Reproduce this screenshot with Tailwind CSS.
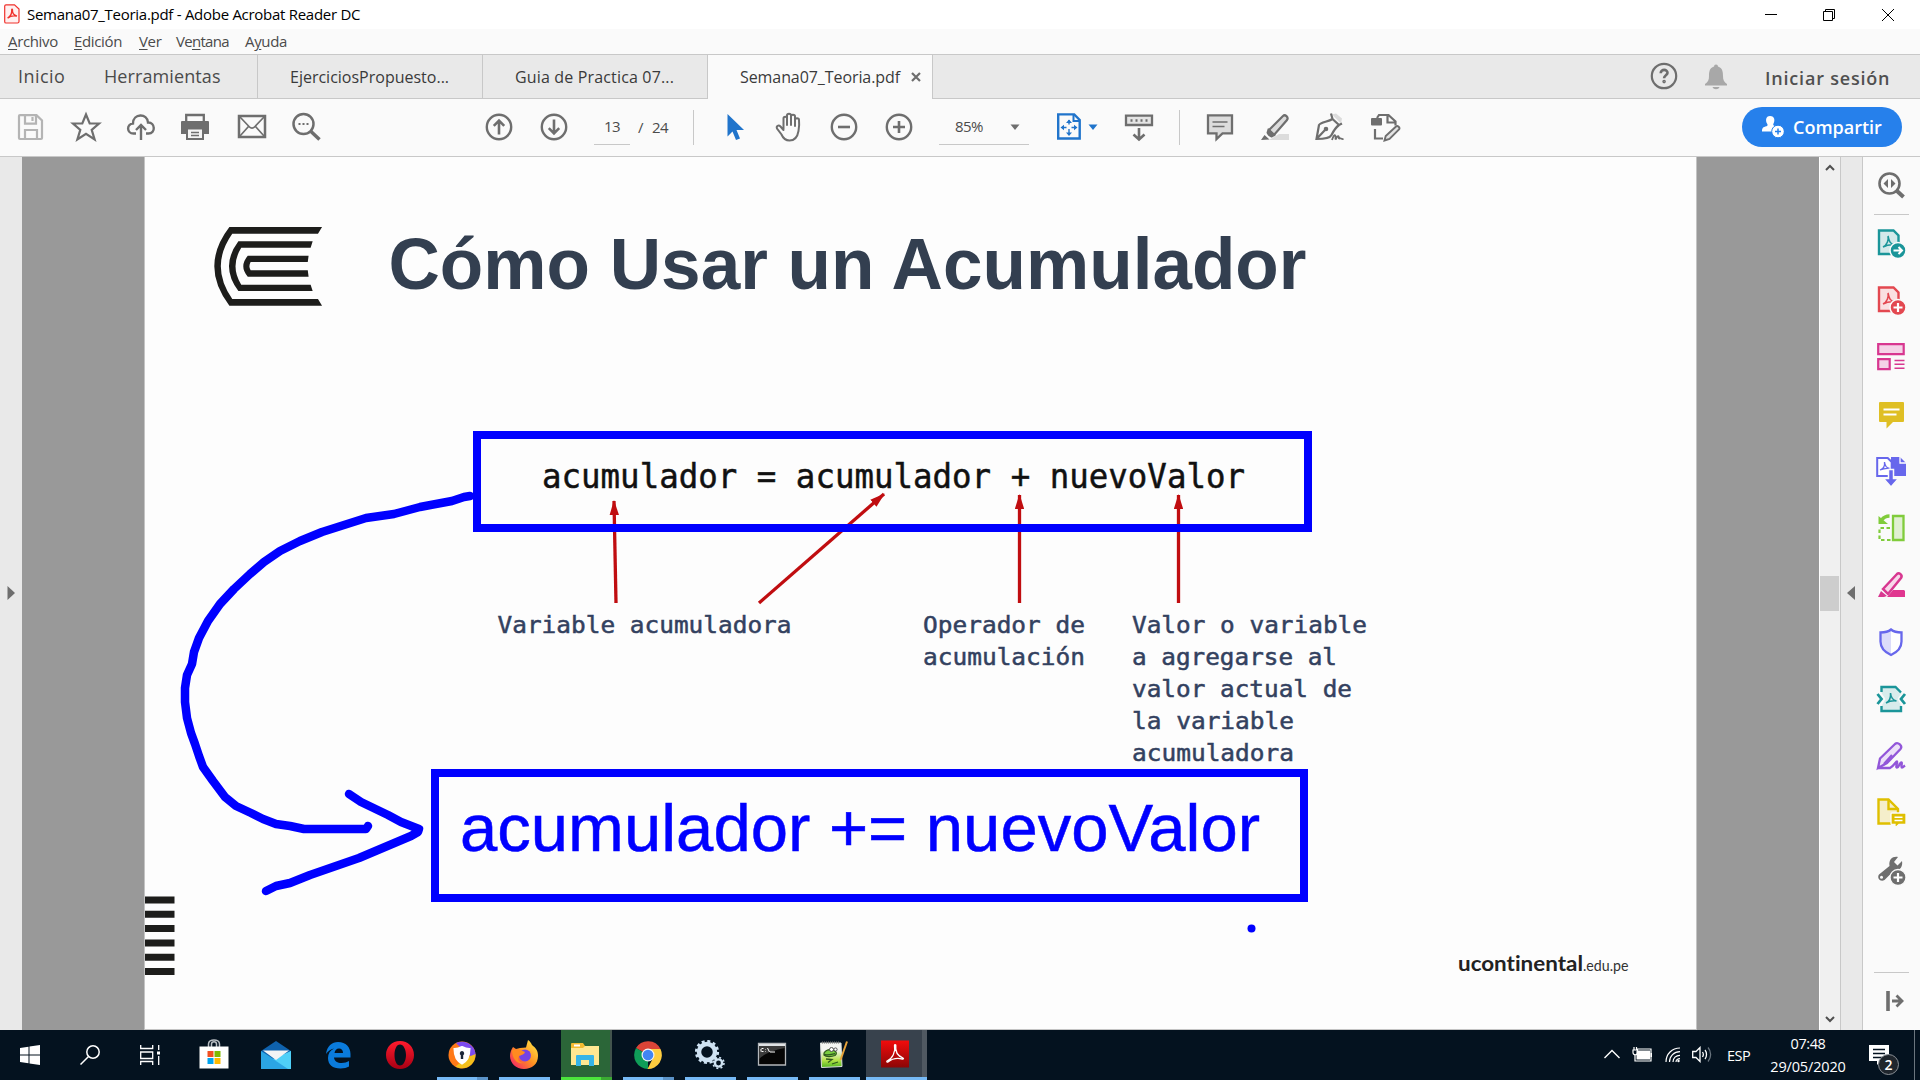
<!DOCTYPE html>
<html lang="es">
<head>
<meta charset="utf-8">
<title>Semana07_Teoria.pdf - Adobe Acrobat Reader DC</title>
<script src="https://cdn.jsdelivr.net/npm/@tailwindcss/browser@4"></script>
</head>
<body class="w-[1920px] h-[1080px] overflow-hidden flex flex-col bg-[#fafafa] font-['Open_Sans',sans-serif] text-[#4b4b4b]">

<!-- Title bar -->
<header class="h-[29px] shrink-0 bg-white flex items-center text-black">
  <svg class="ml-1 mr-[7px] mb-0.5 w-4 h-5 shrink-0" viewBox="0 0 16 20" fill="none" stroke="#f0322d"><path d="M2 .8H10.500L15 5v12.500a1.500 1.500 0 0 1-1.500 1.500H2a1.300 1.300 0 0 1-1.300-1.300V2A1.300 1.300 0 0 1 2 .8z" fill="#fff0f0" stroke-width="1.200"/><path d="M3.500 14c3-1.500 4.500-5 4.200-8.200 0-1 .9-.8.800.2-.3 3 1.500 5.200 4.500 6.200M4 14c2-2 5-2.500 8.500-2" stroke-width="1.300"/></svg>
  <span class="text-[15px] tracking-[-0.28px] whitespace-nowrap leading-none">Semana07_Teoria.pdf - Adobe Acrobat Reader DC</span>
  <div class="ml-auto flex items-center">
    <svg class="w-[58px] h-6" viewBox="0 0 58 24" stroke="#000"><path d="M23 11.500h12"/></svg>
    <svg class="w-[59px] h-6" viewBox="0 0 59 24" fill="none" stroke="#000"><path d="M23.500 8.500h9v9h-9zM25.500 8.500v-2h9v9h-2"/></svg>
    <svg class="w-[61px] h-6" viewBox="0 0 61 24" stroke="#000"><path d="M23 6l12 12M35 6l-12 12"/></svg>
  </div>
</header>

<!-- Menu bar -->
<nav class="h-[25px] shrink-0 flex items-center pl-2 pb-px text-[15px] leading-none tracking-[-0.35px] whitespace-nowrap">
  <span class="w-[66px]"><u class="underline-offset-2">A</u>rchivo</span>
  <span class="w-[65px]"><u class="underline-offset-2">E</u>dición</span>
  <span class="w-[37px]"><u class="underline-offset-2">V</u>er</span>
  <span class="w-[69px] tracking-[-0.7px]">Ve<u class="underline-offset-2">n</u>tana</span>
  <span>A<u class="underline-offset-2">y</u>uda</span>
</nav>

<!-- Tab strip -->
<div class="h-[45px] shrink-0 flex bg-[#e9e9e9] border-t border-[#c8c8c8] whitespace-nowrap text-[#4b4b4b]">
  <div class="w-[258px] border-r border-b border-[#c8c8c8] flex items-center pl-[18px] text-lg leading-none pb-0.5"><span class="w-[86px] tracking-[0.45px]">Inicio</span><span class="tracking-[0.1px]">Herramientas</span></div>
  <div class="w-[225px] border-r border-b border-[#c8c8c8] flex items-center pl-8 text-base leading-none text-[#3a3a3a]">EjerciciosPropuesto...</div>
  <div class="w-[225px] border-r border-b border-[#c8c8c8] flex items-center pl-8 text-base leading-none tracking-[0.16px] text-[#3a3a3a]">Guia de Practica 07...</div>
  <div class="w-[225px] border-r border-[#c8c8c8] bg-[#fafafa] flex items-center pl-8 text-base leading-none tracking-[-0.08px] text-[#3a3a3a]">Semana07_Teoria.pdf<svg class="ml-[11px] w-2.5 h-2.5" viewBox="0 0 10 10" stroke="#6e6e6e" stroke-width="2.200"><path d="M1 1l8 8M9 1l-8 8"/></svg></div>
  <div class="grow border-b border-[#c8c8c8] flex items-center justify-end pr-[29px]">
    <svg class="w-7 h-7 mr-[27px] mb-0.5" viewBox="0 0 28 28" fill="none" stroke="#6e6e6e" stroke-width="2.200"><circle cx="14" cy="14" r="12.200"/><path d="M10.700 11.200c0-4.500 7-4.200 6.800-.3-.1 2.400-3.500 2.400-3.400 5.300" stroke-width="2.600"/><circle cx="14.100" cy="19.600" r=".7"/></svg>
    <svg class="w-[22px] h-[26px] mr-[38px]" viewBox="0 0 22 26" fill="#a8a8a8"><path d="M9 2.500a2 2 0 0 1 4 0C17.500 4 18 8 18 12c0 4 1 6 4 8v1.500H0V20c3-2 4-4 4-8 0-4 .5-8 5-9.500zM7.500 23h7c-1 3-6 3-7 0z"/></svg>
    <span class="pt-0.5 w-[126px] text-lg font-semibold leading-none tracking-[0.8px] text-[#505050]">Iniciar sesión</span>
  </div>
</div>

<!-- Toolbar -->
<div class="h-[58px] shrink-0 flex items-center border-b border-[#c8c8c8] pl-[3px] pb-px text-[15px]">
  <div class="w-[55px] flex justify-center"><svg class="w-8 h-8" viewBox="0 0 32 32" fill="none" stroke="#b4b4b4" stroke-width="2.200"><path d="M5 4.100h16.500L27 9.500V27a1 1 0 0 1-1 1H5a1 1 0 0 1-1-1V5a1 1 0 0 1 1-1z"/><path d="M10 4.500v8.200h11V4.500M10 28v-9h12v9M17.500 6v4"/></svg></div>
  <div class="w-[55px] flex justify-center"><svg class="w-8 h-8" viewBox="0 0 32 32" fill="none" stroke="#6e6e6e" stroke-width="2.200"><path d="M16 3.500l3.700 9H29l-7.300 6.400 2.900 9.600L16 22.800 7.400 28.500l2.900-9.600L3 12.500h9.300z"/></svg></div>
  <div class="w-[55px] flex justify-center"><svg class="w-8 h-8" viewBox="0 0 32 32" fill="none" stroke="#6e6e6e" stroke-width="2.400"><path d="M11 22.500H8.500C1.500 22.500 1.300 13 8 12.500 8 2 22.500 2 23 11.500c7.200-.5 8 11 .5 11H21M16 29V15M11 19l5-5 5 5"/></svg></div>
  <div class="w-[54px] flex justify-center"><svg class="w-8 h-8" viewBox="0 0 32 32"><path d="M7.200 10V4h17.600v6" fill="none" stroke="#6e6e6e" stroke-width="2.300"/><path d="M3 10h26a1 1 0 0 1 1 1v12h-5v-6H7v6H2V11a1 1 0 0 1 1-1z" fill="#6e6e6e"/><path d="M8 17.500h16V28H8z" fill="#f4f4f4" stroke="#6e6e6e" stroke-width="2"/><path d="M12 21.500h8M12 24.500h8" stroke="#6e6e6e" stroke-width="1.300"/></svg></div>
  <div class="w-[57px] pl-0.5 flex justify-center"><svg class="w-8 h-8" viewBox="0 0 32 32" fill="none" stroke="#6e6e6e"><path d="M3 5h26v21H3z" stroke-width="2.500"/><path d="M4 6l9.500 10a3.400 3.400 0 0 0 5 0L28 6M4 25l8.500-9.500M28 25L19.500 15.500" stroke-width="1.700"/></svg></div>
  <div class="w-[54px] flex justify-center"><svg class="w-8 h-8" viewBox="0 0 32 32" fill="none" stroke="#6e6e6e"><circle cx="13.500" cy="13" r="10" stroke-width="2.500"/><path d="M21 20.500l8.500 8" stroke-width="3.500"/><path d="M8.500 13h2M12.500 13h2M16.500 13h2" stroke-width="2"/></svg></div>
  <div class="w-[55px] ml-[138px] flex justify-center"><svg class="w-8 h-8" viewBox="0 0 32 32" fill="none" stroke="#6e6e6e" stroke-width="2.400"><circle cx="16" cy="16" r="12.200"/><path d="M16 23.500V10M10.800 14.800L16 9.600l5.200 5.200" stroke-width="2.600"/></svg></div>
  <div class="w-[55px] flex justify-center"><svg class="w-8 h-8" viewBox="0 0 32 32" fill="none" stroke="#6e6e6e" stroke-width="2.400"><circle cx="16" cy="16" r="12.200"/><path d="M16 8.500V22M10.800 17.200l5.200 5.200 5.200-5.200" stroke-width="2.600"/></svg></div>
  <div class="w-9 h-[35px] ml-[13px] flex items-center justify-center border-b border-[#c8c8c8] tracking-[-0.5px]">13</div>
  <div class="w-[63px] pl-2 flex gap-[9px] tracking-[-0.5px]"><span>/</span><span>24</span></div>
  <div class="w-px h-[35px] bg-[#c8c8c8] mr-[13px]"></div>
  <div class="w-[55px] flex justify-center"><svg class="w-8 h-8" viewBox="0 0 32 32" fill="#2074cb"><path d="M8.500 3v22.500l5-5 3.500 8.500 4-1.500-3.500-8.500H25z"/></svg></div>
  <div class="w-[54px] pl-0.5 flex justify-center"><svg class="w-8 h-8" viewBox="0 0 32 32" fill="none" stroke="#6e6e6e" stroke-width="2" stroke-linecap="round"><path d="M9.500 18V7.500c0-2.500 3.500-2.500 3.500 0V14M13 14V4.500C13 2 17 2 17 4.500V14M17 14V5.500c0-2.500 4-2.500 4 0V15M21 15V9c0-2.500 4-2.500 4 0 .5 4 0 8-.5 11-1 6-4 9.500-9 9.500-4 0-6.500-2.500-8-6L3 17.500C2 15 4.500 13.500 6.500 15.500l3 3.500"/></svg></div>
  <div class="w-[55px] flex justify-center"><svg class="w-8 h-8" viewBox="0 0 32 32" fill="none" stroke="#6e6e6e" stroke-width="2.400"><circle cx="16" cy="16" r="12.200"/><path d="M10 16h12" stroke-width="2.600"/></svg></div>
  <div class="w-[55px] flex justify-center"><svg class="w-8 h-8" viewBox="0 0 32 32" fill="none" stroke="#6e6e6e" stroke-width="2.400"><circle cx="16" cy="16" r="12.200"/><path d="M10 16h12M16 10v12" stroke-width="2.600"/></svg></div>
  <div class="w-[90px] h-[35px] ml-[13px] flex items-center pl-4 pr-[9px] justify-between border-b border-[#c8c8c8] tracking-[-0.6px]"><span>85%</span><svg class="w-2.5 h-1.5" viewBox="0 0 10 6" fill="#6e6e6e"><path d="M.5.500h9L5 6z"/></svg></div>
  <div class="ml-6 w-[49px] flex items-center gap-[3px]"><svg class="w-8 h-8 shrink-0" viewBox="0 0 32 32" fill="none" stroke="#2074cb"><path d="M5.200 3.400h16l5.500 5.600v18.500H5.200z" stroke-width="2.400"/><path d="M20.500 3.500V10h6" stroke-width="2"/><path d="M16 9v4.500M16 18v5M9 16.500h4.500M18.500 16.500H23" stroke-width="1.400"/><path d="M16 8.500l3 3.500h-6zM16 25l3-3.500h-6zM7.500 16.500L11 13.800v5.400zM24.500 16.500L21 13.800v5.400z" fill="#2074cb" stroke="none"/></svg><svg class="w-2.5 h-1.5 shrink-0" viewBox="0 0 10 6" fill="#2074cb"><path d="M.5.500h9L5 6z"/></svg></div>
  <div class="ml-[21px] w-8"><svg class="w-8 h-8" viewBox="0 0 32 32" fill="none" stroke="#6e6e6e"><path d="M3 4.700h26v9.300H3z" stroke-width="2.300" fill="#e4e4e4"/><path d="M7.500 9.500h2M12.500 9.500h2M17.500 9.500h2M22.500 9.500h2" stroke-width="2.600"/><path d="M16 17v11M10.500 23.500l5.500 5 5.500-5" stroke-width="2.600"/></svg></div>
  <div class="w-px h-[35px] bg-[#c8c8c8] ml-[24px] mr-[24px]"></div>
  <div class="w-8"><svg class="w-8 h-8" viewBox="0 0 32 32" stroke="#6e6e6e"><path d="M4 4.300h24v18h-9.500L12.500 28v-5.700H4z" fill="#dcdcdc" stroke-width="2.300"/><path d="M8.500 11h15M8.500 15.500h12" stroke-width="1.400"/></svg></div>
  <div class="w-8 ml-[23px]"><svg class="w-8 h-8" viewBox="0 0 32 32"><path d="M10 29l10-6h10v6z" fill="#dcdcdc"/><path d="M10 19L24 5c2-2 6 1 4 4L15 24z" fill="#dcdcdc" stroke="#6e6e6e" stroke-width="2.200"/><path d="M9 17l8 7-4 2.500c-2 0-5-2.500-5.500-5zM2 29l3.500-5 5 4.500z" fill="#6e6e6e"/></svg></div>
  <div class="w-8 ml-[22px]"><svg class="w-8 h-8" viewBox="0 0 32 32" fill="none" stroke="#6e6e6e" stroke-width="2.200"><path d="M19 3.500l9 9 1-5-6-5z" fill="#dcdcdc" stroke="none"/><path d="M18 2.500l1.500 5.500 6.500 6 3-1.500M19.500 8C15 11 8 11 6 14L3.500 28C11 28 17 27 18.500 24c2-4 3.500-7 7.500-10M3.500 28l8.500-9"/><circle cx="13" cy="18" r="1.200" fill="#6e6e6e"/><path d="M19 29c2-6 4-7 3.500-.5 2-4 3.500-4.500 3.500-.5 1-2 2 .5 4.500 0" stroke-width="1.800"/></svg></div>
  <div class="w-8 ml-[24px]"><svg class="w-8 h-8" viewBox="0 0 32 32" fill="none" stroke="#6e6e6e" stroke-width="2.200"><path d="M8 7l2-3h9.500l7 6.500v4M18.500 4v7.500H26M6 18v9.500h8"/><rect x="2" y="7" width="11" height="7.500" rx="1" fill="#6e6e6e" stroke="none"/><path d="M15.500 29.500l1.200-4.500L27 15.500c1.500-1.500 4.500 1 3 3L20.500 28z" fill="#e4e4e4" stroke-width="1.900"/></svg></div>
  <div class="ml-auto mr-[18px] w-[160px] h-10 rounded-full bg-[#2680eb] text-white flex items-center pl-5 text-lg font-semibold leading-none">
    <svg class="w-[22px] h-[22px] mr-[9px]" viewBox="0 0 22 22"><path d="M8 0c5 0 5 5 3.500 7.500-.8 1.500 0 2 2 2.700L11 15.500H0c0-4 1-4.300 4.500-5.300 1.500-.5 1.200-1.500.5-2.700C3.500 5 3.500 0 8 0z" fill="#fff"/><circle cx="16" cy="15.500" r="6.300" fill="#fff" stroke="#2680eb"/><path d="M13 15.500h6M16 12.500v6" stroke="#2680eb" stroke-width="1.500"/></svg>Compartir
  </div>
</div>

<!-- Document area -->
<main class="h-[873px] shrink-0 flex">
  <div class="w-[22px] bg-[#e9e9e9] flex items-center justify-center pb-0.5"><svg class="w-2 h-3.5" viewBox="0 0 8 14" fill="#6e6e6e"><path d="M.5 0l7.500 7-7.500 7z"/></svg></div>
  <div class="w-[122px] bg-[#999]"></div>
  <div class="w-[1553px] border-x border-b border-[#c4c4c4] bg-[#fdfdfd]">
    <svg class="block w-[1551px] h-[872px]" viewBox="145 157 1551 872">
      <defs><marker id="tip" viewBox="0 0 16 10" refX="15" refY="5" markerWidth="15" markerHeight="9.500" markerUnits="userSpaceOnUse" orient="auto"><path d="M0 0l16 5-16 5z" fill="#c00d10"/></marker></defs>
      <!-- University mark -->
      <g transform="translate(140 200) scale(.4082 .3333)" fill="#1d1d1b">
        <path d="M219 81H446L436 101H226Q170 199 226 297H436L446 317H219Q145 199 219 81z"/>
        <path d="M241 124H423L418 143H248Q220 199 248 254H418L423 273H241Q195 199 241 124z"/>
        <path d="M264 167H413L411 186H271Q265 199 271 211H411L413 230H264Q242 199 264 167z"/>
      </g>
      <text x="388.500" y="289" font-family="Liberation Sans, Arial, sans-serif" font-weight="700" font-size="71.500" textLength="918" lengthAdjust="spacingAndGlyphs" fill="#333f50">Cómo Usar un Acumulador</text>
      <text x="542" y="487.500" font-family="DejaVu Sans Mono, monospace" font-size="33.500" textLength="703" lengthAdjust="spacingAndGlyphs" fill="#111" stroke="#111" stroke-width=".5">acumulador = acumulador + nuevoValor</text>
      <g stroke="#c00d10" stroke-width="3.300">
        <path d="M616 603L614 501" marker-end="url(#tip)"/><path d="M759 603L884 494" marker-end="url(#tip)"/><path d="M1019.500 603V495" marker-end="url(#tip)"/><path d="M1178.500 603V495" marker-end="url(#tip)"/>
      </g>
      <g font-family="DejaVu Sans Mono, monospace" font-size="23.500" fill="#33415f" stroke="#33415f" stroke-width=".5">
        <text x="497.500" y="632.500" textLength="294" lengthAdjust="spacingAndGlyphs">Variable acumuladora</text>
        <text x="923" y="632.500" textLength="162" lengthAdjust="spacingAndGlyphs">Operador de</text>
        <text x="923" y="664.500" textLength="162" lengthAdjust="spacingAndGlyphs">acumulación</text>
        <text x="1132" y="633" textLength="235" lengthAdjust="spacingAndGlyphs">Valor o variable</text>
        <text x="1132" y="665" textLength="205" lengthAdjust="spacingAndGlyphs">a agregarse al</text>
        <text x="1132" y="697" textLength="220" lengthAdjust="spacingAndGlyphs">valor actual de</text>
        <text x="1132" y="729" textLength="162" lengthAdjust="spacingAndGlyphs">la variable</text>
        <text x="1132" y="761" textLength="162" lengthAdjust="spacingAndGlyphs">acumuladora</text>
      </g>
      <!-- Blue annotations -->
      <g fill="none" stroke="#00f" stroke-width="8">
        <path d="M477 435h831v93H477zM435 773h869v125H435z"/>
        <g stroke-linecap="round" stroke-linejoin="round" stroke-width="8.500">
          <path d="M470 496L464 497 452 501 420 507 394 514 366 518 344 525 322 532 300 541 280 551 264 562 250 574 234 589 220 604 208 621 199 638 194 652 192 664 187 675 185 688 185 702 187 718 191 733 195 744 199 756 203 767 213 781 225 797 236 806 251 813 263 819 276 824 290 826 304 829 366 829 368 826"/>
          <path d="M349 794L361 802 388 815 401 822 419 829 418 832 411 836 359 858 310 875 290 883 276 886 266 891"/>
        </g>
      </g>
      <circle cx="1251.500" cy="928.500" r="4" fill="#00f"/>
      <text x="460" y="851" font-family="Liberation Sans, Arial, sans-serif" font-size="66" textLength="800" lengthAdjust="spacingAndGlyphs" fill="#00f" stroke="#00f" stroke-width=".5">acumulador += nuevoValor</text>
      <path d="M145 900h29.500M145 914.300h29.500M145 928.600h29.500M145 943h29.500M145 957.300h29.500M145 971.600h29.500" stroke="#1d1d1b" stroke-width="7"/>
      <g font-family="Lato, sans-serif">
        <text class="[font-variant-ligatures:none]" x="1458" y="971" font-weight="700" font-size="21" textLength="125" lengthAdjust="spacingAndGlyphs" fill="#222">ucontinental</text>
        <text x="1583" y="971" font-size="16" textLength="45.500" lengthAdjust="spacingAndGlyphs" fill="#333">.edu.pe</text>
      </g>
    </svg>
  </div>
  <div class="w-[122px] bg-[#999]"></div>
  <!-- Scrollbar -->
  <div class="w-[22px] bg-[#f0f0f0] border-x border-l-white border-r-[#c8c8c8] flex flex-col items-start">
    <svg class="mt-[7px] ml-[5px] w-2.5 h-2" viewBox="0 0 10 8" fill="none" stroke="#505050" stroke-width="2"><path d="M1 6l4-4 4 4"/></svg>
    <div class="mt-[404px] w-[19px] h-[35px] bg-[#cdcdcd]"></div>
    <svg class="mt-auto ml-[5px] mb-[7px] w-2.5 h-2" viewBox="0 0 10 8" fill="none" stroke="#505050" stroke-width="2"><path d="M1 2l4 4 4-4"/></svg>
  </div>
  <div class="w-[22px] bg-[#e9e9e9] border-r border-[#c8c8c8] flex items-center justify-center pb-0.5 pr-0.5"><svg class="w-2 h-3.5" viewBox="0 0 8 14" fill="#6e6e6e"><path d="M8 0v14L0 7z"/></svg></div>
  <!-- Tools pane -->
  <aside class="grow flex flex-col items-center pt-3 pb-[13px] pr-px">
    <svg class="w-8 h-8" viewBox="0 0 32 32" fill="none" stroke="#6e6e6e"><circle cx="14.500" cy="14.500" r="10" stroke-width="2.600"/><path d="M22 22l6.500 6" stroke-width="4"/><path d="M13 10v9l-4.500-4.500zM16 10v9l4.500-4.500z" fill="#6e6e6e" stroke="none"/></svg>
    <div class="w-[35px] h-px bg-[#c8c8c8] mt-[13px] mb-[12px]"></div>
    <div class="flex flex-col gap-[25px]">
      <svg class="w-8 h-8" viewBox="0 0 32 32" fill="none"><path d="M4 3.500h14.500l5 5V27H4z" fill="#d3e9ea" stroke="#1a9599" stroke-width="2.400"/><path d="M8 20c4-2 6-7 5-11 1 6 2.500 8 7 9-4-.5-8 0-12 2z" stroke="#1a9599" stroke-width="1.600"/><circle cx="23" cy="23.500" r="8" fill="#1a9599" stroke="#fafafa" stroke-width="1.500"/><path d="M18.500 23.500h8M23.500 20l3.500 3.500-3.500 3.500" stroke="#fff" stroke-width="2"/></svg>
      <svg class="w-8 h-8" viewBox="0 0 32 32" fill="none"><path d="M4 3.500h14.500l5 5V27H4z" fill="#fae0e1" stroke="#e34850" stroke-width="2.400"/><path d="M8 20c4-2 6-7 5-11 1 6 2.500 8 7 9-4-.5-8 0-12 2z" stroke="#e34850" stroke-width="1.600"/><circle cx="23" cy="23.500" r="8" fill="#e34850" stroke="#fafafa" stroke-width="1.500"/><path d="M18.500 23.500h9M23 19v9" stroke="#fff" stroke-width="2.200"/></svg>
      <svg class="w-8 h-8" viewBox="0 0 32 32" fill="#f4d3e7" stroke="#d83790" stroke-width="2.200"><path d="M3.200 3.200h25.500v10H3.200zM3.200 18.200h11.500v10H3.200z"/><path d="M19.500 19.500h10M19.500 23.300h10M19.500 27.200h10" stroke-width="1.500"/></svg>
      <svg class="w-8 h-8" viewBox="0 0 32 32"><path d="M5 4h23a1 1 0 0 1 1 1v18a1 1 0 0 1-1 1H18l-6.500 6.500V24H5a1 1 0 0 1-1-1V5a1 1 0 0 1 1-1z" fill="#dfbf24"/><path d="M8.500 11.500h16M8.500 16.500h13" stroke="#fff" stroke-width="2.200"/></svg>
      <svg class="w-8 h-8" viewBox="0 0 32 32" fill="none"><path d="M16 2h9l6 6v13H16z" fill="#6767ec"/><path d="M25 2v6h6" stroke="#fff" stroke-width="1.300"/><path d="M2.200 3h10.500l4 4v14H2.200z" fill="#fff" stroke="#6767ec" stroke-width="2"/><path d="M5 15c3-1 5-4 4.500-8 .5 4 2 6 5 6.500-3-.5-6 0-9.500 1.500z" stroke="#6767ec" stroke-width="1.300"/><path d="M13.500 14.500h5v9h5L16 32l-7.500-8.500h5z" fill="#6767ec" stroke="#fafafa" stroke-width="1.500"/></svg>
      <svg class="w-8 h-8" viewBox="0 0 32 32" fill="none" stroke="#80cc3b"><path d="M18 4h10.500v24H18z" fill="#e0f0d2" stroke-width="2.300"/><path d="M15 16H4.500v12H17" stroke-width="2.200" stroke-dasharray="3.500 2.500"/><path d="M14.500 4c-4 0-6 1.500-8 4" stroke-width="3.300"/><path d="M3.500 4v8H13z" fill="#80cc3b" stroke="none"/></svg>
      <svg class="w-8 h-8" viewBox="0 0 32 32"><path d="M12 28l6-7h11l1 1v6z" fill="#e0368f"/><path d="M8 20L22 5c2-2 6 1 4 4L13 25z" fill="#f8d8ea" stroke="#d83790" stroke-width="2.500"/><path d="M3 28l3-6 6 5-3 1z" fill="#d83790"/></svg>
      <svg class="w-8 h-8" viewBox="0 0 32 32"><path d="M16 3.500c3 2.500 6 3 10.500 3v9c0 6-4 10.500-10.500 13.500C9.500 26 5.500 21.500 5.500 15.500v-9c4.500 0 7.500-.5 10.500-3z" fill="#fff"/><path d="M16 3.500V29C9.500 26 5.500 21.500 5.500 15.500v-9c4.500 0 7.500-.5 10.500-3z" fill="#dcdcfa"/><path d="M16 3.500c3 2.500 6 3 10.500 3v9c0 6-4 10.500-10.500 13.500C9.500 26 5.500 21.500 5.500 15.500v-9c4.500 0 7.500-.5 10.500-3z" fill="none" stroke="#6767ec" stroke-width="2.300"/></svg>
      <svg class="w-8 h-8" viewBox="0 0 32 32" fill="none" stroke="#1a9599"><path d="M6.500 4h14l6 6-4 6 4 7v5H6.500v-5l4-7-4-6z" fill="#d8ecec" stroke="none"/><path d="M6.500 9V4h14l5.500 5.500M6.500 23v5h19.500v-5" stroke-width="2.400"/><path d="M2.500 11l4 5-4 5M30 11l-4 5 4 5" stroke-width="2.800"/><path d="M11 20c3-1.500 5-5 4.500-10 .5 5 2 7 6 8-4-.5-7 0-10.500 2z" stroke-width="1.500"/></svg>
      <svg class="w-8 h-8" viewBox="0 0 32 32" fill="none" stroke="#9256d9" stroke-width="2.300"><path d="M3 28l2-9.500L20 4c3-2.500 8 2 5.500 5L12 23z" fill="#ece0f8"/><path d="M3 28h12c4-2 6-7 7-6.500s-2 6 0 6 2-4 4-5-.5 5 1 5 1.500-1 3-2M9 24l8-9"/></svg>
      <svg class="w-8 h-8" viewBox="0 0 32 32" fill="none" stroke="#dfbf00" stroke-width="2.400"><path d="M3.500 2.500h10l9.500 9.500v14.500H3.500z" fill="#f5eecb"/><path d="M13.500 2.500V12H23"/><path d="M17 16h13a1 1 0 0 1 1 1v9.500a1 1 0 0 1-1 1h-6l-4 3.500v-3.500h-3a1 1 0 0 1-1-1V17a1 1 0 0 1 1-1z" fill="#dfbf00" stroke="#fafafa" stroke-width="1.300"/><path d="M19.500 20.200h8M19.500 23.500h8" stroke="#fff" stroke-width="1.600"/></svg>
      <svg class="w-8 h-8" viewBox="0 0 32 32"><path d="M4 20.500L14.500 12C13.500 5 18 2 23 3l-4 5 3.500 3.500L27 7c1 6-2 9.500-7.500 9L9.500 26c-4 2.500-8-2-5.500-5.500z" fill="#6e6e6e"/><circle cx="6.500" cy="23.200" r="1.500" fill="#fafafa"/><circle cx="23" cy="23.500" r="8" fill="#6e6e6e" stroke="#fafafa" stroke-width="1.300"/><path d="M18.500 23.500h9M23 19v9" stroke="#fff" stroke-width="2.200"/></svg>
    </div>
    <div class="w-[35px] h-px bg-[#c8c8c8] mt-auto mb-[12px]"></div>
    <svg class="ml-1.5 w-8 h-8" viewBox="0 0 32 32" fill="none" stroke="#6e6e6e"><path d="M10 6v20" stroke-width="3.600"/><path d="M14 16h10M18.500 10.500L24 16l-5.500 5.500" stroke-width="2.800"/></svg>
  </aside>
</main>

<!-- Taskbar -->
<footer class="h-[50px] shrink-0 bg-[#04121f] flex text-white">
  <div class="w-[60px] flex justify-center pt-[15px]"><svg class="w-5 h-5" viewBox="0 0 20 20" fill="#fff"><path d="M0 3l8.500-1.300v7.800H0zM9.500 1.500L20 0v9.500H9.500zM0 10.500h8.500v7.800L0 17zM9.500 10.500H20V20l-10.500-1.500z"/></svg></div>
  <div class="w-[60px] flex justify-center pt-[15px]"><svg class="w-5 h-5" viewBox="0 0 20 20" fill="none" stroke="#fff" stroke-width="1.500"><circle cx="13" cy="7" r="6.200"/><path d="M8.500 11.500L.5 19.500"/></svg></div>
  <div class="w-[60px] flex justify-center pt-[15px] mr-[3px]"><svg class="w-5 h-5" viewBox="0 0 20 20" fill="none" stroke="#fff" stroke-width="1.300"><path d="M.7 0v3.500h12V0M.7 7h12v6.500H.7zM.7 20v-3.500h12V20M18.700 0v5M18.700 11v9"/><path d="M17 6.500h3v3h-3z" fill="#fff" stroke="none"/></svg></div>
  <div class="w-[62px] flex justify-center pt-[9px]"><svg class="w-[30px] h-[30px]" viewBox="0 0 30 30"><path d="M9.500 8V5c0-5.500 11-5.500 11 0v3M12.500 8V5c0-3 5-3 5 0v3" fill="none" stroke="#b9bec3" stroke-width="1.500"/><path d="M.5 7.500h29V29.500H.5z" fill="#fff"/><path d="M8.500 12h6v6h-6z" fill="#f25022"/><path d="M15.500 12h6v6h-6z" fill="#7fba00"/><path d="M8.500 19h6v6h-6z" fill="#00a4ef"/><path d="M15.500 19h6v6h-6z" fill="#ffb900"/></svg></div>
  <div class="w-[62px] flex justify-center pt-2.5"><svg class="w-[30px] h-[30px]" viewBox="0 0 30 30"><path d="M0 11L15 1l15 10v18H0z" fill="#0f62ad"/><path d="M0 11l15 9.500L30 11v18H0z" fill="#2ba5e4"/><path d="M30 11v18H27L12 19z" fill="#4fd0f8"/><path d="M2 10.500h26L15 20z" fill="#f3f4f5"/></svg></div>
  <div class="w-[62px] flex justify-center pt-2.5"><svg class="w-[30px] h-[30px]" viewBox="0 0 30 30" fill="#0a7bdc"><path d="M3 14C4 6 9 2 15 2c8 0 12.500 5.500 12.500 12v3.500H11c.5 4 3.500 5.500 7.500 5.500 3 0 5.500-.8 7.500-2v5.500c-2 1.300-5 2-8.500 2C9.500 28.500 5 24.500 5 18c0-4.500 2-7.500 6-9.500-3.500.8-6 2.500-8 5.500zm8.500-1H20c0-3-1.500-4.500-4-4.500s-4 1.500-4.500 4.500z"/></svg></div>
  <div class="w-[62px] flex justify-center pt-2.5"><svg class="w-[30px] h-[30px]" viewBox="0 0 30 30"><defs><linearGradient id="op" x2="0" y2="1"><stop stop-color="#ff1b2d"/><stop offset="1" stop-color="#a70014"/></linearGradient></defs><path fill="url(#op)" fill-rule="evenodd" d="M15 1c8 0 14 6 14 14s-6 14-14 14S1 23 1 15 7 1 15 1zm0 3.500c-3.500 0-5.500 5-5.500 10.500S11.500 25.500 15 25.500s6-5 6-10.500-2.500-10.500-6-10.500z"/></svg></div>
  <div class="w-[62px] flex flex-col items-center pt-2.5"><svg class="w-[30px] h-[30px]" viewBox="0 0 30 30"><circle cx="15" cy="15" r="13.500" fill="#ff7a18"/><path d="M9 3C20-2 31 8 28 18l-8-4z" fill="#7d4bf0"/><path d="M28.500 14c0 13-13 17-20 12.500L19 18z" fill="#f3c01c"/><path d="M15 7c3 1.500 5 2 7.500 2 0 7-1.500 11.500-7.500 14.500C9 20.500 7.500 16 7.500 9 10 9 12 8.500 15 7z" fill="#fff" stroke="#fff" stroke-width="2"/><path d="M15 11a2.300 2.300 0 0 1 1.200 4.200V19h-2.400v-3.800A2.300 2.300 0 0 1 15 11z" fill="#1b2637"/></svg><div class="mt-auto w-[51px] h-[3px] flex bg-[#5b93c8]"><i class="w-10 bg-[#76b9f5]"></i></div></div>
  <div class="w-[62px] flex flex-col items-center pt-2.5"><svg class="w-[30px] h-[30px]" viewBox="0 0 30 30"><defs><linearGradient id="ff" x1="1" x2="0" y2="1"><stop stop-color="#fff14a"/><stop offset=".5" stop-color="#ff9021"/><stop offset="1" stop-color="#f41272"/></linearGradient></defs><path d="M4 7l3 2 4-1 6-.5L19 0c2 1 3 3 4 5 4 3 6 6 6 11 0 8-6 13-14 13S1 23 1 16c0-3 1-6 3-9z" fill="url(#ff)"/><circle cx="16" cy="15.500" r="6" fill="#7542e5"/><path d="M3 10c5-1 9 0 13 2-1 3-4 3-6 4-3 5 3 8 6 6-6 4-13-2-13-12z" fill="#ff8a20"/></svg><div class="mt-auto w-[51px] h-[3px] bg-[#76b9f5]"></div></div>
  <div class="w-[62px] flex justify-center"><div class="w-[51px] flex flex-col items-center pt-2.5 bg-[#2b6638] border-r-2 border-[#42544d]"><svg class="w-[30px] h-[30px]" viewBox="0 0 30 30"><path d="M1 4a1 1 0 0 1 1-1h11l2 3h14v6H1z" fill="#f4bb32"/><path d="M4 4.500h6v2H4z" fill="#fff"/><path d="M1 8h12l2-2h14v19H1z" fill="#ffe792"/><path d="M6 26V16a1 1 0 0 1 1-1h16a1 1 0 0 1 1 1v10h-5v-6h-8v6z" fill="#36b4e8"/></svg><div class="mt-auto -mr-0.5 w-[51px] h-[3px] flex bg-[#3aaa32]"><i class="w-10 bg-[#4ce53c]"></i></div></div></div>
  <div class="w-[62px] flex flex-col items-center pt-2.5"><svg class="w-[30px] h-[30px]" viewBox="0 0 30 30"><path d="M15 15L3 8A14 14 0 0 1 27.500 9z" fill="#db4437"/><path d="M15 15v14A14 14 0 0 1 3 8z" fill="#0f9d58"/><path d="M15 15V9h12.500A14 14 0 0 1 14.500 29l5-10z" fill="#ffcd40"/><circle cx="15" cy="15" r="6.500" fill="#f4f4f4"/><circle cx="15" cy="15" r="5.300" fill="#4285f4"/></svg><div class="mt-auto w-[51px] h-[3px] flex bg-[#5b93c8]"><i class="w-10 bg-[#76b9f5]"></i></div></div>
  <div class="w-[62px] flex flex-col items-center pt-2.5"><svg class="w-[30px] h-[30px]" viewBox="0 0 30 30" fill="none" stroke="#cfe2f2"><circle cx="12" cy="12" r="8" stroke-width="4.500"/><circle cx="12" cy="12" r="10.800" stroke-width="2.600" stroke-dasharray="3 2.650"/><circle cx="23.500" cy="23" r="3.600" stroke-width="2.400"/><circle cx="23.500" cy="23" r="5.500" stroke-width="1.600" stroke-dasharray="2 2.320"/></svg><div class="mt-auto w-[51px] h-[3px] bg-[#76b9f5]"></div></div>
  <div class="w-[62px] flex flex-col items-center pt-2.5"><svg class="w-[30px] h-[30px]" viewBox="0 0 30 30"><path d="M1.500 3.500h27v21.500h-27z" fill="#050505" stroke="#b4b7ba" stroke-width="1.300"/><path d="M2 4h26v2H2z" fill="#dfe2e5"/><path d="M2 6h26v2C16 10 7 14 2 19z" fill="#3b3b3b"/><path d="M4.500 8.500h2M4.500 11.500h2M4 9v2.500M8.500 9v.5M8.500 11v.5M10.500 8l2 4M13 12h5" fill="none" stroke="#fff"/></svg><div class="mt-auto w-[51px] h-[3px] bg-[#76b9f5]"></div></div>
  <div class="w-[62px] flex flex-col items-center pt-2.5"><svg class="w-[30px] h-[30px]" viewBox="0 0 30 30"><defs><linearGradient id="np" x2="0" y2="1"><stop offset=".3" stop-color="#f4f5f2"/><stop offset=".7" stop-color="#b6e34a"/><stop offset="1" stop-color="#4eb51e"/></linearGradient></defs><path d="M1.500 3H22l1 23.500-20.500 1z" fill="url(#np)" stroke="#dce0dc"/><path d="M3 2.500h18" stroke="#777" stroke-width="2" stroke-dasharray="1 1"/><path d="M5 13c2-3 6-4 10-2.500 3 1.500 3 3.500 1 5-4 1.500-9 1.500-11-.5z" fill="#78cc3e" stroke="#30591e" stroke-width="1.200"/><path d="M5 14.500c4 1 7 0 11-1M7 19l6 .5-4 3M13 24l6-2" fill="none" stroke="#30591e" stroke-width="1.300"/><circle cx="12.500" cy="9.500" r="2" fill="#fff" stroke="#555"/><circle cx="16.500" cy="9.500" r="1.600" fill="#fff" stroke="#555"/><path d="M28 1.500L21.500 20" stroke="#e8a33a" stroke-width="2"/></svg><div class="mt-auto w-[51px] h-[3px] bg-[#76b9f5]"></div></div>
  <div class="w-[61px] ml-px flex flex-col items-center pt-2.5 bg-[#38424d] border-r-[5px] border-[#505962]"><svg class="ml-0.5 w-[30px] h-[30px]" viewBox="0 0 30 30" fill="none"><defs><linearGradient id="ac" x2="0" y2="1"><stop stop-color="#f20c0c"/><stop offset="1" stop-color="#8c0606"/></linearGradient></defs><path d="M1 .5h28v27H1z" fill="url(#ac)"/><path d="M7 21c5-2 9-9 7.500-15.500 0-1 1.500-1 1.300 0C15 12 18 16 23 18c1 .7.300 1.300-.7 1-5-1.300-10-.5-14.300 3-1 .5-1.500-.5-1-1z" stroke="#fff" stroke-width="1.300"/></svg><div class="mt-auto -mr-[5px] w-[61px] h-[3px] bg-[#76b9f5]"></div></div>
  <div class="ml-auto flex">
    <svg class="mt-[19px] w-4 h-3" viewBox="0 0 16 12" fill="none" stroke="#fff" stroke-width="1.400"><path d="M.5 9L8 1.500 15.500 9"/></svg>
    <svg class="ml-3 mt-4 w-5 h-4" viewBox="0 0 20 16"><path d="M4.500 4.500H18v9H4.500zM18.500 7H20v4h-1.500z" fill="#fff"/><path d="M5 3h14v12H3V9M1 4h4.500v2.500C5.500 9.500 1 9.500 1 6.500zM2 1v3M4.500 1v3" fill="none" stroke="#fff" stroke-width="1.200"/></svg>
    <svg class="ml-[13px] mt-[17px] w-4 h-4" viewBox="0 0 16 16" fill="none" stroke="#fff" stroke-width="1.200"><path d="M1 15C1 7 7 1 15 1M4.500 15C4.500 9 9 4.700 15 4.700M8 15c0-4 3-6.700 7-6.700M11 15c0-2 2-3.300 4-3.300"/><circle cx="13.500" cy="14" r="1.200" fill="#fff" stroke="none"/></svg>
    <svg class="ml-[11px] mt-4 w-5 h-[17px]" viewBox="0 0 20 17" fill="none" stroke="#fff" stroke-width="1.300"><path d="M.7 5.500H4l4-4v14l-4-4H.7zM10.500 6c1 1.500 1 3.500 0 5M13 4c2 2.500 2 6.500 0 9"/><path d="M16 1.500c3.500 4 3.500 10 0 14" stroke="#68737d"/></svg>
    <span class="ml-[15px] w-[43px] mt-[17px] text-[14.500px] leading-[18px] tracking-[-0.5px]">ESP</span>
    <div class="w-[76px] mt-[2px] text-center text-[14.500px] leading-[23px] tracking-[-0.15px] whitespace-nowrap"><div class="tracking-[-0.4px]">07:48</div><div>29/05/2020</div></div>
    <div class="relative ml-[23px] w-[45px]">
      <svg class="mt-[15px] w-5 h-5" viewBox="0 0 20 20"><path d="M0 0h20v16h-8l-4 4v-4H0z" fill="#fff"/><path d="M4 4.500h12M4 8.500h12M4 12.500h9" stroke="#04121f" stroke-width="1.300"/></svg>
      <div class="absolute left-[9px] top-[24px] w-[21px] h-[21px] rounded-full bg-[#20262d] border border-[#8b9096] text-[14px] font-semibold flex items-center justify-center leading-none">2</div>
    </div>
    <div class="w-1.5 border-l border-[#6b757e]"></div>
  </div>
</footer>
</body>
</html>
